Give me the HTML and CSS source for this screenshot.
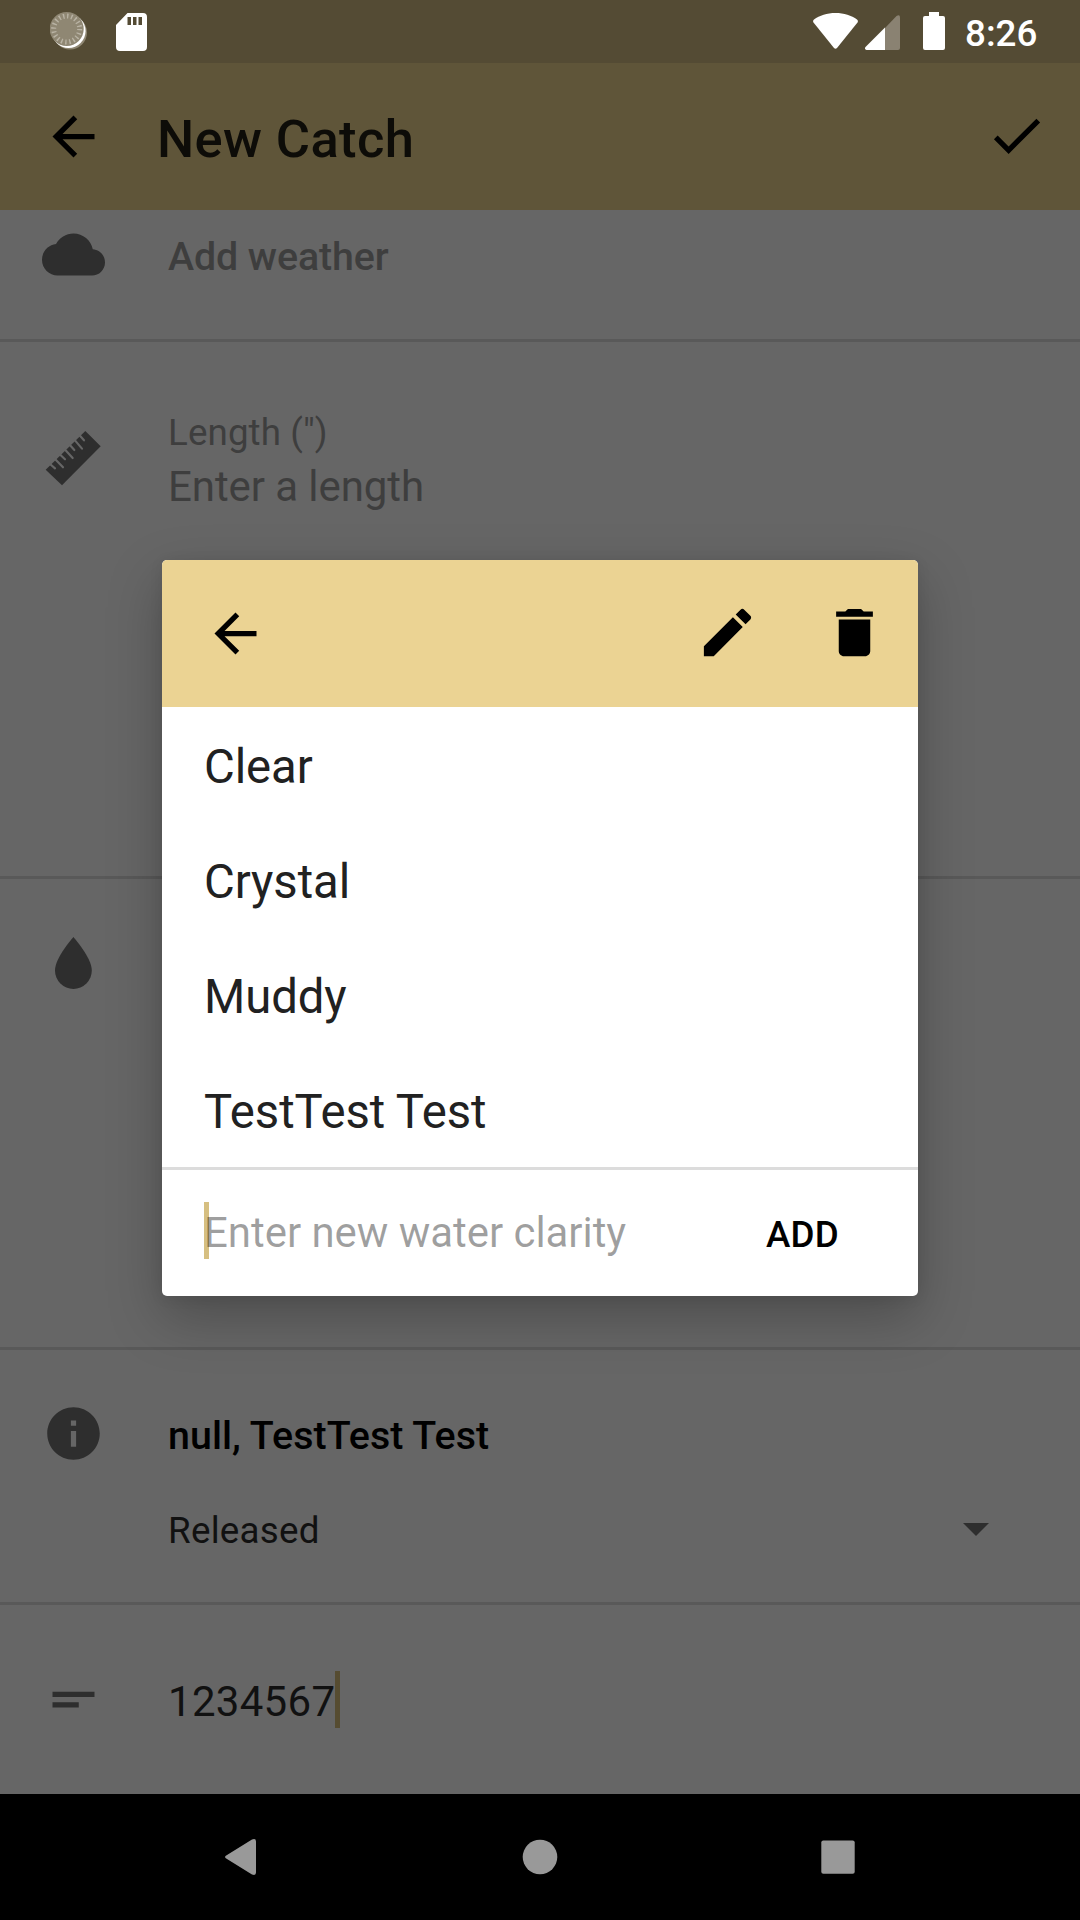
FILE: index.html
```html
<!DOCTYPE html>
<html lang="en">
<head>
<meta charset="utf-8">
<title>New Catch</title>
<link rel="stylesheet" href="styles.css">
</head>
<body>
<div class="screen">
  <header class="status">
    <svg class="sync" viewBox="0 0 38 38"><circle cx="20" cy="20.500" r="17" fill="#8f8773"/><circle cx="18.600" cy="19" r="17" fill="#fff"/><circle cx="16.700" cy="17" r="17" fill="#8f8773"/><circle cx="16.700" cy="17" r="13" fill="none" stroke="#b9b3a4" stroke-width="5" stroke-dasharray="1.400 2.684"/></svg>
    <svg class="sd" viewBox="0 0 31 38"><path fill="#fff" fill-rule="evenodd" d="M11.500 0H27a4 4 0 0 1 4 4v30a4 4 0 0 1-4 4H4a4 4 0 0 1-4-4V12zM11.500 4v8h3.500V4zM17 4v8h3.500V4zM22.500 4v8H26V4z"/></svg>
    <span class="spacer"></span>
    <svg class="wifi" viewBox="0 0 45 36"><path fill="#fff" d="M22.500 0C31 0 38.500 2.500 44 6.500q1.500 1.300.5 3L24 35q-1.500 1.500-3 0L.5 9.500q-1-1.700.5-3C6.500 2.500 14 0 22.500 0z"/></svg>
    <svg class="signal" viewBox="0 0 35 35"><path fill="#8a8272" d="M20 13 31.500 1Q35-1 35 2.500V33q0 2-2 2H20z"/><path fill="#fff" d="M20 12.500V35H1.500Q-1 34 .5 32z"/></svg>
    <svg class="battery" viewBox="0 0 22 38"><path fill="#fff" d="M6 0h10v4h4q2 0 2 2v30q0 2-2 2H2q-2 0-2-2V6q0-2 2-2h4z"/></svg>
    <span class="time">8:26</span>
  </header>
  <div class="appbar">
    <svg class="icon" viewBox="0 0 24 24"><path d="M20 11H7.830l5.590-5.590L12 4l-8 8 8 8 1.410-1.410L7.830 13H20v-2z"/></svg>
    <h1 class="title">New Catch</h1>
    <svg class="icon" viewBox="0 0 24 24"><path d="M9 16.170 4.830 12l-1.420 1.410L9 19 21 7l-1.410-1.410z"/></svg>
  </div>
  <main class="form">
    <section class="row weather">
      <svg class="icon" viewBox="0 0 24 24"><path d="M19.350 10.040C18.670 6.590 15.640 4 12 4 9.110 4 6.600 5.640 5.350 8.040 2.340 8.360 0 10.910 0 14c0 3.310 2.690 6 6 6h13c2.760 0 5-2.240 5-5 0-2.640-2.050-4.780-4.650-4.960z"/></svg>
      <span class="strong hint">Add weather</span>
    </section>
    <section class="row length">
      <svg class="icon" viewBox="18 18 189 189"><path d="M29 149 148 33 194 79 78 196z"/><path class="ticks" d="M42 132 57 145M57 117 81 142M71 103 87 118M86 88 110 114M101 74 115 90M115 59 138 86M130 45 144 61"/></svg>
      <div class="field">
        <span class="label hint">Length (")</span>
        <span class="value hint">Enter a length</span>
      </div>
    </section>
    <section class="row water">
      <svg class="drop" viewBox="0 0 37 52"><path d="M18.400 0S36.800 20.500 36.800 33.500a18.400 18.400 0 0 1-36.800 0C0 20.500 18.400 0 18.400 0z"/></svg>
    </section>
    <section class="row info">
      <svg class="icon" viewBox="0 0 24 24"><path d="M12 2C6.480 2 2 6.480 2 12s4.480 10 10 10 10-4.480 10-10S17.520 2 12 2zm1 15h-2v-6h2v6zm0-8h-2V7h2v2z"/></svg>
      <div class="details">
        <span class="strong">null, TestTest Test</span>
        <div class="select"><span>Released</span><svg class="caret-down" viewBox="0 0 26 13"><path d="M0 0h26L13 13z"/></svg></div>
      </div>
    </section>
    <section class="row notes">
      <svg class="icon" viewBox="0 0 24 24"><path d="M4 9h16v2H4zm0 4h10v2H4z"/></svg>
      <span class="note">1234567</span><i class="cursor"></i>
    </section>
  </main>
  <nav class="navbar">
    <svg viewBox="0 0 36 36"><path d="M4 16 29 .5Q33-1 33 2.500v31q0 3.500-4 2L4 20q-4-2 0-4z"/></svg>
    <svg viewBox="0 0 36 36"><circle cx="18" cy="18" r="17.300"/></svg>
    <svg viewBox="0 0 36 36"><rect x="1.300" y="1.500" width="33.400" height="33.200" rx="2"/></svg>
  </nav>
  <div class="dialog">
    <div class="dialog-bar">
      <svg class="icon" viewBox="0 0 24 24"><path d="M20 11H7.830l5.590-5.590L12 4l-8 8 8 8 1.410-1.410L7.830 13H20v-2z"/></svg>
      <span class="spacer"></span>
      <svg class="icon action" viewBox="0 0 24 24"><path d="M3 17.250V21h3.750L17.810 9.940l-3.750-3.750L3 17.250zM20.710 7.040c.39-.39.39-1.020 0-1.410l-2.340-2.340c-.39-.39-1.020-.39-1.410 0l-1.830 1.830 3.750 3.750 1.830-1.830z"/></svg>
      <svg class="icon action" viewBox="0 0 24 24"><path d="M6 19c0 1.100.9 2 2 2h8c1.100 0 2-.9 2-2V7H6v12zM19 4h-3.500l-1-1h-5l-1 1H5v2h14V4z"/></svg>
    </div>
    <ul class="options">
      <li>Clear</li>
      <li>Crystal</li>
      <li>Muddy</li>
      <li>TestTest Test</li>
    </ul>
    <div class="entry">
      <span class="placeholder">Enter new water clarity</span>
      <button class="add">ADD</button>
    </div>
  </div>
</div>
</body>
</html>
```
FILE: styles.css
```css
* { box-sizing: border-box; }
body { margin: 0; font-family: Roboto, "Noto Sans", sans-serif; background: #666; }
svg { display: block; flex: none; }
.spacer { flex: 1; }
.screen { position: relative; width: 1080px; height: 1920px; display: flex; flex-direction: column; overflow: hidden; background: #666; }
.icon { width: 63px; height: 63px; }

.status { height: 63px; display: flex; align-items: flex-start; padding: 12px 42px 0 50px; background: #544b34; color: #fff; }
.sync { width: 38px; height: 38px; margin-right: 28px; }
.sd { width: 31px; height: 38px; margin-top: .6px; }
.wifi { width: 45px; height: 36px; margin: 1px 7px 0 0; }
.signal { width: 35px; height: 35px; margin: 3px 23px 0 0; }
.battery { width: 22px; height: 38px; margin-right: 20px; }
.time { margin-top: 1px; font-size: 36.750px; line-height: 42px; font-weight: 500; width: 73px; white-space: nowrap; }

.appbar { height: 147px; display: flex; align-items: center; padding: 0 32px 0 42px; background: #5f5539; }
.appbar .icon { position: relative; top: -.5px; }
.title + .icon { top: -1.500px; }
.title { flex: 1; margin: 4px 0 0 52px; font-size: 52.500px; line-height: 62px; font-weight: 500; letter-spacing: .35px; color: #0d0c08; }

.form { flex: 1; display: flex; flex-direction: column; font-size: 36.750px; }
.row { display: flex; align-items: flex-start; padding-left: 42px; border-bottom: 3px solid #595959; fill: #2e2e2e; }
.strong { font-size: 39.375px; line-height: 46px; font-weight: 500; letter-spacing: .05px; color: #000; white-space: pre; }
.hint, .strong.hint { color: #3e3e3e; }
.weather { height: 132px; padding-top: 12.500px; gap: 63px; }
.weather .strong { margin-top: 11px; letter-spacing: -.1px; }
.length { height: 537px; padding-top: 84px; gap: 63px; }
.ticks { fill: none; stroke: #666; stroke-width: 6.500; stroke-linecap: round; }
.field { display: flex; flex-direction: column; }
.label { font-size: 36.750px; line-height: 43px; margin-top: -15px; letter-spacing: .1px; }
.value { font-size: 42px; line-height: 49px; margin-top: 8px; letter-spacing: -.08px; }
.water { height: 471px; padding: 57.500px 0 0 55px; }
.drop { width: 37px; height: 52px; }
.info { height: 255px; padding: 51.500px 91.500px 0 42px; gap: 63px; }
.details { flex: 1; display: flex; flex-direction: column; padding-top: 11px; }
.select { display: flex; justify-content: space-between; align-items: center; line-height: 43px; margin-top: 50px; letter-spacing: .25px; color: #111; }
.caret-down { width: 26px; height: 13px; position: relative; top: -1px; }
.notes { flex: 1; border: 0; padding-top: 62.500px; }
.note { margin: 9px 0 0 63px; font-size: 42px; line-height: 49px; letter-spacing: .3px; color: #111; }
.cursor { width: 5px; height: 57px; margin-top: 3.500px; background: #564c31; }

.navbar { height: 126px; display: flex; justify-content: center; align-items: center; gap: 262.500px; background: #000; fill: #999; }
.navbar svg { width: 36px; height: 36px; position: relative; left: -.3px; top: -.5px; }

.dialog { position: absolute; left: 162px; top: 560px; width: 756px; height: 736px; border-radius: 5px; overflow: hidden; background: #fff; box-shadow: 0 21px 54px rgba(0, 0, 0, .25), 0 2px 14px rgba(0, 0, 0, .08); }
.dialog-bar { height: 147px; display: flex; align-items: center; padding: 0 32px 0 42px; gap: 64px; background: #ebd393; }
.action { position: relative; top: -1px; }
.options { margin: 0; padding: 0; list-style: none; border-bottom: 3px solid #dcdcdc; }
.options li { height: 115px; padding-left: 42px; font-size: 47.250px; line-height: 121px; letter-spacing: -.06px; color: #212121; }
.entry { height: 126px; display: flex; align-items: flex-start; padding: 32px 0 0 42px; }
.placeholder { flex: 1; height: 57px; font-size: 42px; line-height: 61px; letter-spacing: -.05px; color: rgba(0, 0, 0, .38); background: linear-gradient(#d6bf81, #d6bf81) 0 0 / 5px 57px no-repeat; }
.add { margin: 11px 79px 0 0; padding: 0; border: 0; background: none; font: 500 36.750px/43px Roboto, sans-serif; letter-spacing: .2px; color: #000; }
```
